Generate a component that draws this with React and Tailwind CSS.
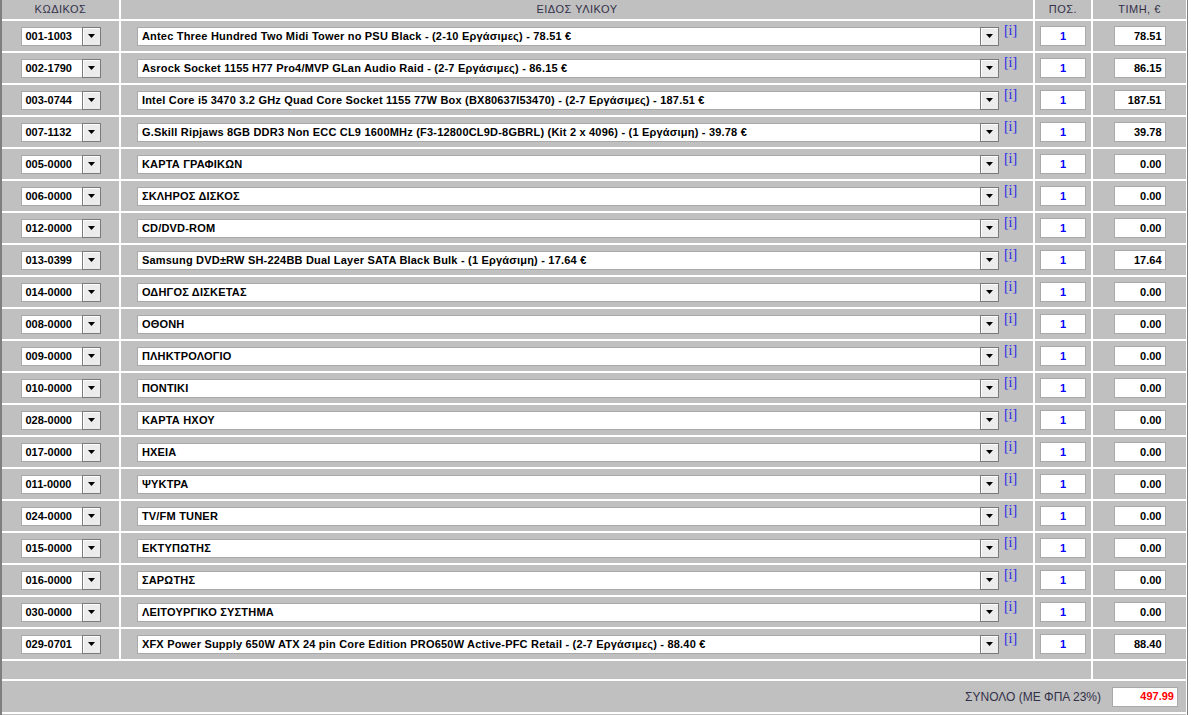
const ROWS = [
  ['001-1003', 'Antec Three Hundred Two Midi Tower no PSU Black - (2-10 Εργάσιμες) - 78.51 €', '78.51'],
  ['002-1790', 'Asrock Socket 1155 H77 Pro4/MVP GLan Audio Raid - (2-7 Εργάσιμες) - 86.15 €', '86.15'],
  ['003-0744', 'Intel Core i5 3470 3.2 GHz Quad Core Socket 1155 77W Box (BX80637I53470) - (2-7 Εργάσιμες) - 187.51 €', '187.51'],
  ['007-1132', 'G.Skill Ripjaws 8GB DDR3 Non ECC CL9 1600MHz (F3-12800CL9D-8GBRL) (Kit 2 x 4096) - (1 Εργάσιμη) - 39.78 €', '39.78'],
  ['005-0000', 'ΚΑΡΤΑ ΓΡΑΦΙΚΩΝ', '0.00'],
  ['006-0000', 'ΣΚΛΗΡΟΣ ΔΙΣΚΟΣ', '0.00'],
  ['012-0000', 'CD/DVD-ROM', '0.00'],
  ['013-0399', 'Samsung DVD±RW SH-224BB Dual Layer SATA Black Bulk - (1 Εργάσιμη) - 17.64 €', '17.64'],
  ['014-0000', 'ΟΔΗΓΟΣ ΔΙΣΚΕΤΑΣ', '0.00'],
  ['008-0000', 'ΟΘΟΝΗ', '0.00'],
  ['009-0000', 'ΠΛΗΚΤΡΟΛΟΓΙΟ', '0.00'],
  ['010-0000', 'ΠΟΝΤΙΚΙ', '0.00'],
  ['028-0000', 'ΚΑΡΤΑ ΗΧΟΥ', '0.00'],
  ['017-0000', 'ΗΧΕΙΑ', '0.00'],
  ['011-0000', 'ΨΥΚΤΡΑ', '0.00'],
  ['024-0000', 'TV/FM TUNER', '0.00'],
  ['015-0000', 'ΕΚΤΥΠΩΤΗΣ', '0.00'],
  ['016-0000', 'ΣΑΡΩΤΗΣ', '0.00'],
  ['030-0000', 'ΛΕΙΤΟΥΡΓΙΚΟ ΣΥΣΤΗΜΑ', '0.00'],
  ['029-0701', 'XFX Power Supply 650W ATX 24 pin Core Edition PRO650W Active-PFC Retail - (2-7 Εργάσιμες) - 88.40 €', '88.40'],
]

const font = { fontFamily: '"Liberation Sans", Arial, sans-serif' }

function DropButton() {
  return (
    <div className="w-[19px] h-[19px] shrink-0 border border-[#7a7a7a] bg-[#ececec] flex items-center justify-center shadow-[inset_1px_1px_0_#ffffff]">
      <svg width="7" height="4" viewBox="0 0 7 4">
        <polygon points="0,0 7,0 3.5,4" fill="#000" />
      </svg>
    </div>
  )
}

function Select({ value, width, wide }) {
  return (
    <div className={`flex items-center ${width}`}>
      <div
        className={`flex-1 h-[19px] bg-white border border-[#a9a9a9] border-r-0 pl-[4px] flex items-center text-[11px] font-bold text-black whitespace-nowrap overflow-hidden ${
          wide ? 'tracking-[0.2px]' : ''
        }`}
      >
        {value}
      </div>
      <DropButton />
    </div>
  )
}

export default function App() {
  return (
    <div className="w-[1191px] bg-white" style={font}>
      <div className="w-[1188px] bg-white border-l-2 border-r border-[#7f7f7f] grid grid-cols-[117px_912px_56px_93px] gap-[2px] pr-[2px]">
        {['ΚΩΔΙΚΟΣ', 'ΕΙΔΟΣ ΥΛΙΚΟΥ', 'ΠΟΣ.', 'ΤΙΜΗ, €'].map((h) => (
          <div key={h} className="h-[19px] bg-[#c0c0c0] flex items-center justify-center text-[11px] tracking-[0.5px] text-[#33304a]">
            {h}
          </div>
        ))}

        {ROWS.map(([code, name, price]) => (
          <div key={code} className="contents">
            <div className="h-[30px] bg-[#c0c0c0] flex items-center justify-center">
              <Select value={code} width="w-[80px]" />
            </div>
            <div className="h-[30px] bg-[#c0c0c0] flex items-center justify-center gap-[5px]">
              <Select value={name} width="w-[862px]" wide />
              <span className="self-start mt-[3px] text-[14px] leading-[14px] text-[#2a2ae6]" style={{ fontFamily: '"Liberation Serif", serif' }}>
                [i]
              </span>
            </div>
            <div className="h-[30px] bg-[#c0c0c0] flex items-center justify-center">
              <div className="w-[46px] h-[20px] bg-white border border-[#a9a9a9] flex items-center justify-center text-[11px] font-bold text-[#0000ff]">
                1
              </div>
            </div>
            <div className="h-[30px] bg-[#c0c0c0] flex items-center justify-center">
              <div className="w-[52px] h-[20px] bg-white border border-[#a9a9a9] flex items-center justify-end pr-[3px] text-[11px] font-bold text-black">
                {price}
              </div>
            </div>
          </div>
        ))}

        <div className="col-span-3 h-[18px] bg-[#c0c0c0]" />
        <div className="h-[18px] bg-[#c0c0c0]" />

        <div className="col-span-4 h-[31px] bg-[#c0c0c0] flex items-center justify-end gap-[11px] pr-[8px]">
          <span className="text-[12px] text-[#33304a]">ΣΥΝΟΛΟ (ΜΕ ΦΠΑ 23%)</span>
          <div className="w-[66px] h-[20px] bg-white border border-[#a9a9a9] flex items-center justify-end pr-[3px] text-[11px] font-bold text-[#ff0000]">
            497.99
          </div>
        </div>
        <div className="col-span-4 h-[2px] bg-[#c0c0c0]" />
      </div>
    </div>
  )
}
